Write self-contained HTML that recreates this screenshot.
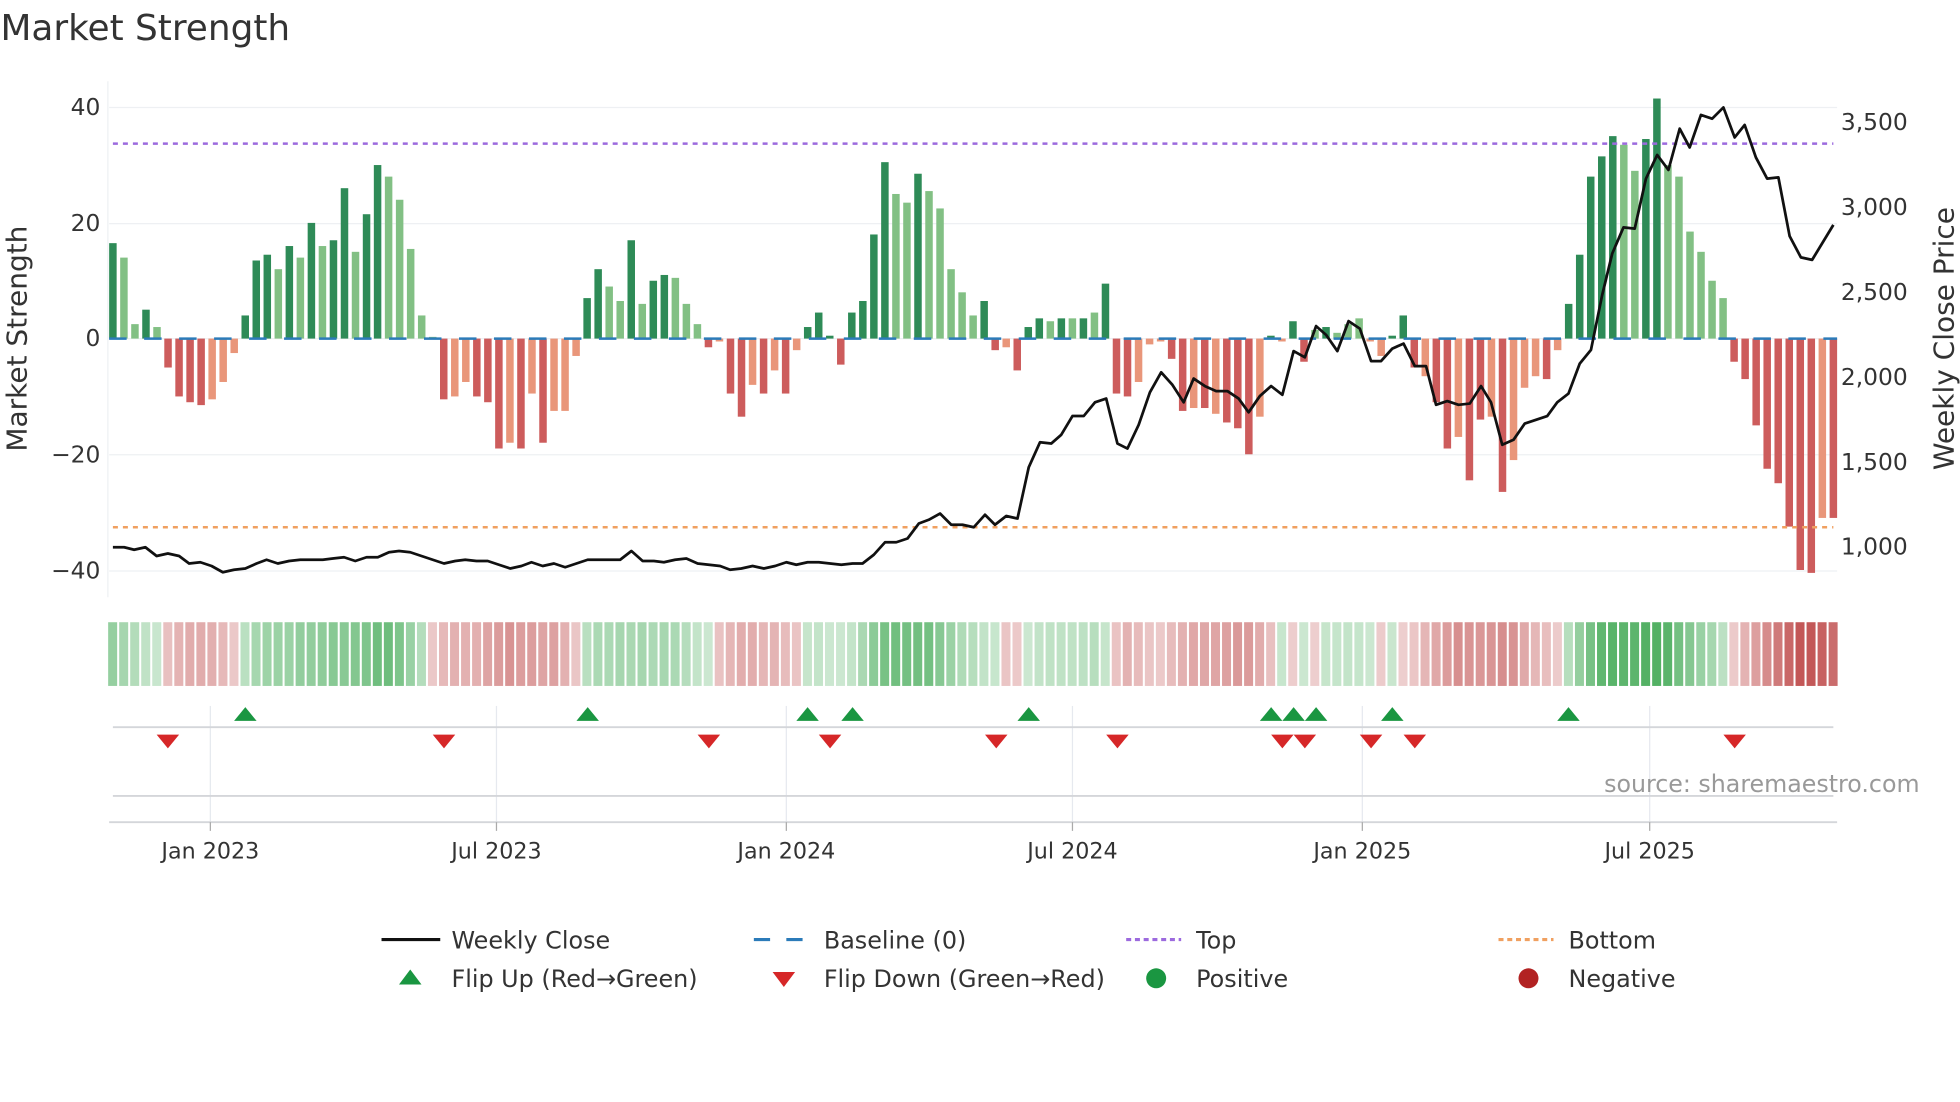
<!DOCTYPE html>
<html><head><meta charset="utf-8"><style>
html,body{margin:0;padding:0;background:#fff;}
svg{display:block;font-family:"DejaVu Sans","Liberation Sans",sans-serif;}
</style></head><body>
<svg id="s" width="1960" height="1102" viewBox="0 0 1568 882" xmlns="http://www.w3.org/2000/svg">
<rect width="1568" height="882" fill="#fff"/>
<text x="0" y="32" font-size="28.7" fill="#333">Market Strength</text>
<g stroke="#eef0f3" stroke-width="1">
<line x1="87" y1="86" x2="1470" y2="86"/><line x1="87" y1="179" x2="1470" y2="179"/>
<line x1="87" y1="364" x2="1470" y2="364"/><line x1="87" y1="457" x2="1470" y2="457"/>
<line x1="87" y1="271" x2="1470" y2="271"/>
<line x1="86" y1="65" x2="86" y2="478"/>
</g>
<g font-size="18.7" fill="#333" text-anchor="end">
<text x="80" y="92">40</text><text x="80" y="185">20</text><text x="80" y="277">0</text>
<text x="80" y="370">−20</text><text x="80" y="463">−40</text>
</g>
<g font-size="18.7" fill="#333">
<text x="1473" y="104">3,500</text><text x="1473" y="172">3,000</text><text x="1473" y="240">2,500</text>
<text x="1473" y="308">2,000</text><text x="1473" y="376">1,500</text><text x="1473" y="444">1,000</text>
</g>
<text transform="translate(21,271) rotate(-90)" font-size="22.4" fill="#333" text-anchor="middle">Market Strength</text>
<text transform="translate(1563,271) rotate(-90)" font-size="22.4" fill="#333" text-anchor="middle">Weekly Close Price</text>
<g id="bars"></g>
<line x1="87" y1="271" x2="1470" y2="271" stroke="#2b7bb9" stroke-width="2" stroke-dasharray="14,14"/>
<line x1="90" y1="115" x2="1467" y2="115" stroke="#9c6ade" stroke-width="2" stroke-dasharray="4,4"/>
<line x1="90" y1="422" x2="1467" y2="422" stroke="#f0a060" stroke-width="2" stroke-dasharray="4,4"/>
<polyline id="price" fill="none" stroke="#111" stroke-width="2.2" stroke-linejoin="round"/>
<g id="heat"></g>
<g stroke="#e6e9ef" stroke-width="1">
<line x1="168" y1="565" x2="168" y2="658"/><line x1="397" y1="565" x2="397" y2="658"/>
<line x1="629" y1="565" x2="629" y2="658"/><line x1="858" y1="565" x2="858" y2="658"/>
<line x1="1090" y1="565" x2="1090" y2="658"/><line x1="1320" y1="565" x2="1320" y2="658"/>
</g>
<g stroke="#d4d6da" stroke-width="1.5">
<line x1="90" y1="582" x2="1467" y2="582"/><line x1="90" y1="637" x2="1467" y2="637"/>
<line x1="87" y1="658" x2="1470" y2="658"/>
</g>
<g stroke="#aaa" stroke-width="1">
<line x1="168" y1="658" x2="168" y2="665"/><line x1="397" y1="658" x2="397" y2="665"/>
<line x1="629" y1="658" x2="629" y2="665"/><line x1="858" y1="658" x2="858" y2="665"/>
<line x1="1090" y1="658" x2="1090" y2="665"/><line x1="1320" y1="658" x2="1320" y2="665"/>
</g>
<g id="marks"></g>
<text x="1536" y="634" font-size="19" fill="#999" text-anchor="end">source: sharemaestro.com</text>
<g font-size="17.8" fill="#333" text-anchor="middle">
<text x="168" y="687">Jan 2023</text><text x="397" y="687">Jul 2023</text><text x="629" y="687">Jan 2024</text>
<text x="858" y="687">Jul 2024</text><text x="1090" y="687">Jan 2025</text><text x="1320" y="687">Jul 2025</text>
</g>
<g font-size="19.1" fill="#333">
<line x1="305" y1="752" x2="352" y2="752" stroke="#111" stroke-width="2.5"/>
<text x="361" y="759">Weekly Close</text>
<line x1="603" y1="752" x2="647" y2="752" stroke="#2b7bb9" stroke-width="2.5" stroke-dasharray="13,13"/>
<text x="659" y="759">Baseline (0)</text>
<line x1="901" y1="752" x2="945" y2="752" stroke="#9c6ade" stroke-width="2.5" stroke-dasharray="4,3"/>
<text x="957" y="759">Top</text>
<line x1="1199" y1="752" x2="1243" y2="752" stroke="#f0a060" stroke-width="2.5" stroke-dasharray="4,3"/>
<text x="1255" y="759">Bottom</text>
<polygon points="319,788 337,788 328,776" fill="#1a9641"/>
<text x="361" y="790">Flip Up (Red→Green)</text>
<polygon points="618,778 636,778 627,790" fill="#d62728"/>
<text x="659" y="790">Flip Down (Green→Red)</text>
<circle cx="925" cy="783" r="8" fill="#1a9641"/>
<text x="957" y="790">Positive</text>
<circle cx="1223" cy="783" r="8" fill="#b22222"/>
<text x="1255" y="790">Negative</text>
</g>
</svg>
<script>
var NS="http://www.w3.org/2000/svg";
var V=[[16.5,1],[14,0],[2.5,0],[5,1],[2,0],[-5,1],[-10,1],[-11,1],[-11.5,1],[-10.5,0],[-7.5,0],[-2.5,0],[4,1],[13.5,1],[14.5,1],[12,0],[16,1],[14,0],[20,1],[16,0],[17,1],[26,1],[15,0],[21.5,1],[30,1],[28,0],[24,0],[15.5,0],[4,0],[0.3,0],
[-10.5,1],[-10,0],[-7.5,0],[-10,1],[-11,1],[-19,1],[-18,0],[-19,1],[-9.5,0],[-18,1],[-12.5,0],[-12.5,0],[-3,0],[7,1],[12,1],[9,0],[6.5,0],[17,1],[6,0],[10,1],[11,1],[10.5,0],[6,0],[2.5,0],[-1.5,1],[-0.5,0],[-9.5,1],[-13.5,1],[-8,0],[-9.5,1],[-5.5,0],[-9.5,1],[-2,0],[2,1],[4.5,1],[0.5,1],[-4.5,1],[4.5,1],[6.5,1],[18,1],[30.5,1],[25,0],[23.5,0],[28.5,1],[25.5,0],[22.5,0],[12,0],[8,0],[4,0],[6.5,1],[-2,1],[-1.5,0],[-5.5,1],[2,1],[3.5,1],[3,0],[3.5,1],[3.5,0],[3.5,1],[4.5,0],[9.5,1],
[-9.5,1],[-10,1],[-7.5,0],[-1,0],[-0.5,0],[-3.5,1],[-12.5,1],[-12,0],[-12,1],[-13,0],[-14.5,1],[-15.5,1],[-20,1],[-13.5,0],[0.5,1],[-0.5,0],[3,1],[-4,1],[1.5,0],[2,1],[1,0],[2.5,0],[3.5,0],[-0.5,0],[-3,0],[0.5,1],[4,1],[-5,1],[-6.5,0],[-11,1],[-19,1],[-17,0],[-24.5,1],[-14,1],[-13.5,0],[-26.5,1],[-21,0],[-8.5,0],[-6.5,0],[-7,1],[-2,0],[6,1],[14.5,1],[28,1],[31.5,1],[35,1],[33.5,0],[29,0],[34.5,1],[41.5,1],[30,0],[28,0],[18.5,0],[15,0],[10,0],[7,0],[-4,1],[-7,1],[-15,1],[-22.5,1],[-25,1],[-32.5,1],[-40,1],[-40.5,1],[-31,0],[-31,1]];
var bars=document.getElementById("bars"),heat=document.getElementById("heat");
var step=(1467-90)/(V.length-1);
function el(t,a,p){var e=document.createElementNS(NS,t);for(var k in a)e.setAttribute(k,a[k]);p.appendChild(e);return e;}
V.forEach(function(d,i){var v=d[0],x=90+i*step,h=Math.abs(v)*4.63,y=v>=0?271-h:271;
var c=v>=0?(d[1]?"#2e8b57":"#82c084"):(d[1]?"#cd5c5c":"#e9967a");
el("rect",{x:x-3,y:y,width:6,height:Math.max(h,0.8),fill:c},bars);
var sm=(v+(V[i-1]?V[i-1][0]:v)+(V[i+1]?V[i+1][0]:v))/3;
var a=0.25+0.65*Math.min(Math.abs(sm)/40,1);
el("rect",{x:x-3.8,y:498,width:7.2,height:51,fill:sm>=0?"rgb(46,160,67)":"rgb(185,60,60)","fill-opacity":a},heat);
});
var P=[[90,438],[99,438],[107,440],[116,438],[125,445],[134,443],[143,445],[151,451],[160,450],[169,453],[178,458],[187,456],[196,455],[205,451],[213,448],[222,451],[231,449],[240,448],[249,448],[258,448],[266,447],[275,446],[284,449],[293,446],[302,446],[311,442],[319,441],[328,442],[337,445],[346,448],[355,451],[364,449],[372,448],[381,449],[390,449],[399,452],[408,455],[417,453],[425,450],[434,453],[443,451],[452,454],[461,451],[470,448],[478,448],[487,448],[496,448],[505,441],[514,449],[523,449],[531,450],[540,448],[549,447],[558,451],[567,452],[576,453],[584,456],[593,455],[602,453],[611,455],[620,453],[629,450],[637,452],[646,450],[655,450],[664,451],[673,452],[682,451],[690,451],[699,444],[708,434],[717,434],[726,431],[735,419],[743,416],[752,411],[761,420],[770,420],[779,422],[788,412],[796,420],[805,413],[814,415],[823,374],[832,354],[841,355],[849,348],[858,333],[867,333],[876,322],[885,319],[894,355],[902,359],[911,340],[920,314],[929,298],[938,308],[947,322],[955,303],[964,309],[973,313],[982,313],[991,319],[999,330],[1008,317],[1017,309],[1026,316],[1035,281],[1044,286],[1053,261],[1061,268],[1070,281],[1079,257],[1088,263],[1097,289],[1105,289],[1114,279],[1123,275],[1132,293],[1141,293],[1149,324],[1158,321],[1167,324],[1176,323],[1185,309],[1193,322],[1202,356],[1211,352],[1220,339],[1229,336],[1238,333],[1246,322],[1255,315],[1264,291],[1273,280],[1282,236],[1290,203],[1299,182],[1308,183],[1317,143],[1326,124],[1335,136],[1344,103],[1352,118],[1361,92],[1370,95],[1379,86],[1388,110],[1396,100],[1405,126],[1414,143],[1423,142],[1432,189],[1441,206],[1450,208],[1467,180]];
document.getElementById("price").setAttribute("points",P.map(function(p){return p.join(",")}).join(" "));
var m=document.getElementById("marks");
[196,470,646,682,823,1017,1035,1053,1114,1255].forEach(function(x){el("polygon",{points:(x-9)+",577 "+(x+9)+",577 "+x+",566",fill:"#1a9641"},m);});
[134,355,567,664,797,894,1026,1044,1097,1132,1388].forEach(function(x){el("polygon",{points:(x-9)+",588 "+(x+9)+",588 "+x+",599",fill:"#d62728"},m);});
</script>
</body></html>
